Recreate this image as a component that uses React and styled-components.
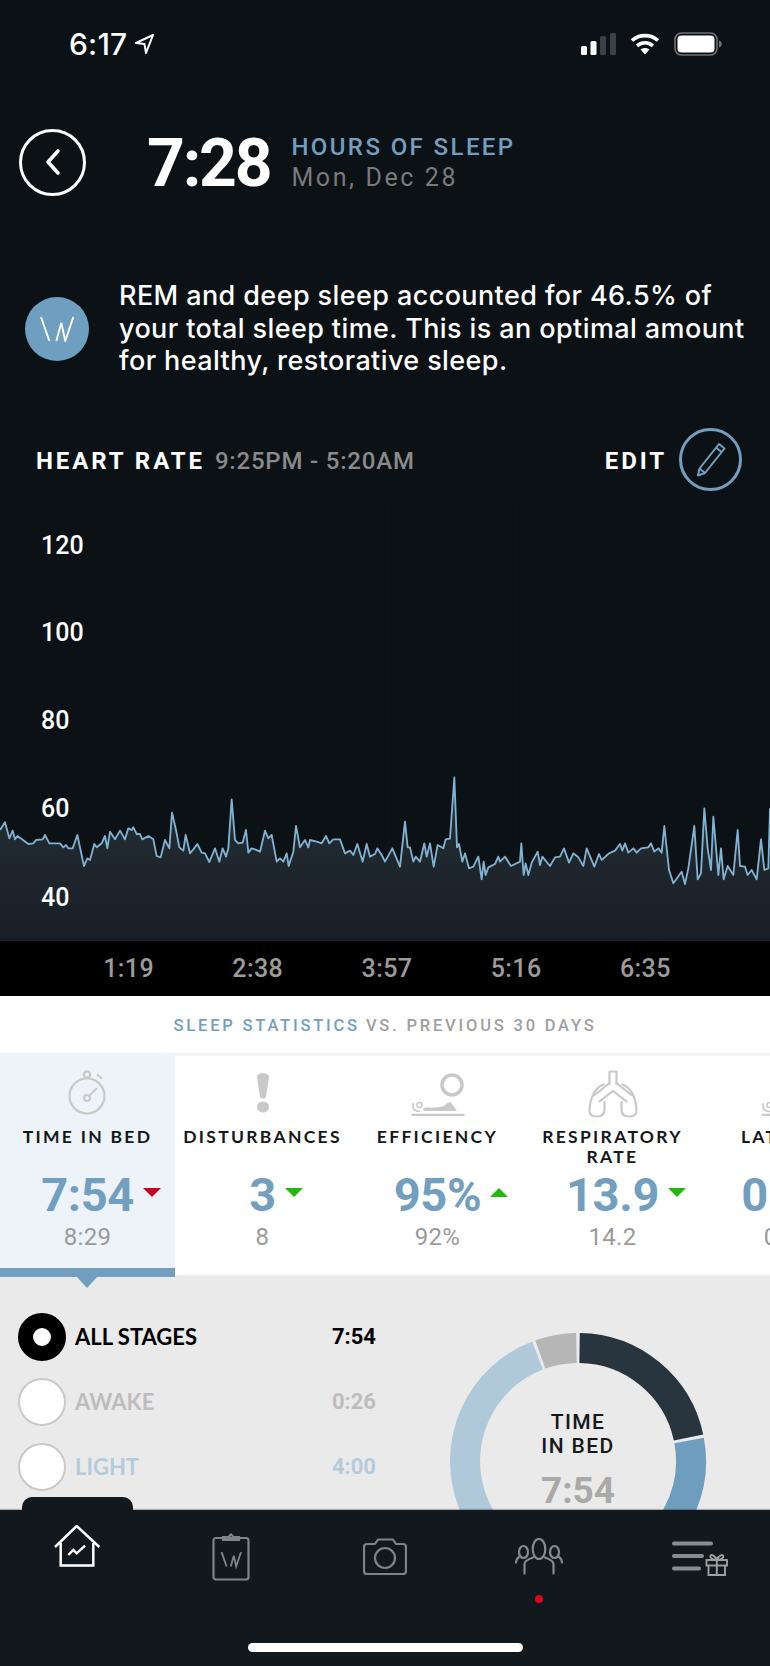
import React from 'react';
import styled, { createGlobalStyle } from 'styled-components';

const din = '"Roboto", "Liberation Sans", sans-serif';
const sans = '"Lato", "Liberation Sans", sans-serif';
const blue = '#729fbf';

const GlobalStyle = createGlobalStyle`
  html, body { margin: 0; padding: 0; background: #0c1116; }
  * { box-sizing: border-box; }
`;

const Page = styled.div`
  width: 770px;
  height: 1666px;
  display: flex;
  flex-direction: column;
  overflow: hidden;
  background: #0c1116;
  color: #fff;
  font-family: ${sans};
`;

const StatusBar = styled.div`
  height: 88px;
  display: flex;
  align-items: center;
  justify-content: space-between;
  padding: 0 48px 0 69px;
`;
const StatusTime = styled.div`
  display: flex;
  align-items: center;
  gap: 7px;
  font: 500 30px "Inter", sans-serif;
  letter-spacing: 0.2px;
`;
const StatusIcons = styled.div`
  display: flex;
  align-items: center;
  gap: 14px;
`;

const Header = styled.div`
  height: 148px;
  display: flex;
  align-items: center;
  padding-left: 19px;
`;
const BackButton = styled.div`
  width: 67px;
  height: 67px;
  border: 3.5px solid #fff;
  border-radius: 50%;
  display: flex;
  align-items: center;
  justify-content: center;
`;
const BigTime = styled.div`
  margin-left: 61px;
  padding-top: 3px;
  font: 700 66px ${din};
  line-height: 1;
  letter-spacing: -2.2px;
`;
const HeaderText = styled.div`
  margin-left: 21px;
  display: flex;
  flex-direction: column;
  gap: 3px;
`;
const HeaderTitle = styled.div`
  font: 500 24px/28px ${din};
  letter-spacing: 2.4px;
  color: ${blue};
`;
const HeaderDate = styled.div`
  font: 400 25px/28px ${din};
  letter-spacing: 2.6px;
  color: #7a7a7a;
`;

const Insight = styled.div`
  height: 186px;
  display: flex;
  align-items: center;
  gap: 30px;
  padding-left: 25px;
`;
const Avatar = styled.div`
  flex: none;
  width: 64px;
  height: 64px;
  border-radius: 50%;
  background: #6f9fc0;
  display: flex;
  align-items: center;
  justify-content: center;
`;
const InsightText = styled.p`
  margin: 0;
  font: 500 27px/32.5px "Inter", ${sans};
  letter-spacing: 0.4px;
  white-space: nowrap;
  color: #fff;
`;

const ChartHead = styled.div`
  height: 74px;
  display: flex;
  align-items: center;
  padding: 4px 28px 0 36px;
  font: 700 24px ${din};
  letter-spacing: 2.9px;
`;
const ChartRange = styled.span`
  margin-left: 10px;
  color: #8a8a8a;
  font-weight: 500;
  letter-spacing: 0.8px;
`;
const EditLabel = styled.span`
  margin-left: auto;
  margin-right: 12px;
`;
const EditCircle = styled.div`
  width: 63px;
  height: 63px;
  margin-top: -4px;
  border: 3px solid ${blue};
  border-radius: 50%;
  display: flex;
  align-items: center;
  justify-content: center;
`;

const Chart = styled.div`
  position: relative;
  height: 445px;
  background: #0c1116;
  svg { display: block; }
`;
const YAxisLabel = styled.span`
  position: absolute;
  left: 41px;
  top: ${p => p.$y - 496 - 14}px;
  font: 500 25px/30px ${din};
  color: #fff;
`;

const XAxis = styled.div`
  height: 55px;
  background: #000;
  display: grid;
  grid-template-columns: repeat(5, 129.2px);
  padding-left: 64px;
  align-items: center;
  justify-items: center;
  font: 500 25px ${din};
  letter-spacing: 0.4px;
  color: #9b9b9b;
`;

const StatsTitle = styled.div`
  height: 57px;
  background: #fff;
  display: flex;
  align-items: center;
  justify-content: center;
  gap: 6px;
  font: 500 16.5px ${din};
  letter-spacing: 2.8px;
  padding-top: 1px;
  color: #a0a0a0;
`;
const StatsAccent = styled.span`
  color: ${blue};
`;

const CardRow = styled.div`
  height: 222px;
  display: flex;
  background: #f5f5f5;
  padding-top: 3px;
  flex: none;
`;
const Card = styled.div`
  position: relative;
  flex: none;
  width: 175px;
  margin-top: ${p => (p.$active ? '-3px' : '0')};
  height: ${p => (p.$active ? '224px' : '219px')};
  padding-top: ${p => (p.$active ? '17px' : '14px')};
  background: ${p => (p.$active ? '#edf3f8' : '#fff')};
  border-bottom: ${p => (p.$active ? `9px solid ${blue}` : 'none')};
  display: flex;
  flex-direction: column;
  align-items: center;
  z-index: ${p => (p.$active ? 1 : 0)};
`;
const CardPointer = styled.div`
  position: absolute;
  left: 77px;
  bottom: -20px;
  width: 0;
  height: 0;
  border-left: 10px solid transparent;
  border-right: 10px solid transparent;
  border-top: 11px solid ${blue};
`;
const CardIcon = styled.div`
  height: 46px;
  display: flex;
  justify-content: center;
`;
const CardLabel = styled.div`
  margin-top: 11px;
  height: 40px;
  font: 700 17.5px/20px ${sans};
  letter-spacing: 2.3px;
  color: #14181b;
  text-align: center;
  white-space: pre-line;
`;
const CardValue = styled.div`
  position: relative;
  margin-top: 4px;
  font: 700 47px/48px ${din};
  letter-spacing: -0.4px;
  color: ${blue};
`;
const Trend = styled.span`
  position: absolute;
  left: calc(100% + 9px);
  top: 17px;
  width: 0;
  height: 0;
  border-left: 9px solid transparent;
  border-right: 9px solid transparent;
  border-top: ${p => (p.$up ? '0' : `9px solid ${p.$color}`)};
  border-bottom: ${p => (p.$up ? `9px solid ${p.$color}` : '0')};
`;
const CardPrev = styled.div`
  margin-top: 4px;
  font: 400 24px/28px ${din};
  letter-spacing: 0.3px;
  color: #9a9a9a;
`;

const StagePanel = styled.div`
  flex: 1;
  min-height: 0;
  overflow: hidden;
  background: #eaeaea;
  display: flex;
`;
const StageList = styled.div`
  flex: none;
  width: 358px;
  margin-left: 18px;
  padding-top: 29px;
  display: flex;
  flex-direction: column;
`;
const StageRow = styled.div`
  height: 65px;
  display: flex;
  align-items: center;
  color: ${p => p.$color};
`;
const Radio = styled.div`
  width: 48px;
  height: 48px;
  flex: none;
  border-radius: 50%;
  background: #fff;
  border: ${p => (p.$on ? '15px solid #000' : '2px solid #c9c9c9')};
`;
const StageName = styled.span`
  margin-left: 9px;
  font: 700 22px ${sans};
`;
const StageTime = styled.span`
  margin-left: auto;
  font: 700 22px ${din};
`;
const Donut = styled.div`
  position: relative;
  flex: none;
  width: 260px;
  height: 260px;
  margin: 56px 0 0 72px;
`;
const DonutCaption = styled.div`
  position: absolute;
  inset: 0;
  display: flex;
  flex-direction: column;
  align-items: center;
  padding-top: 79px;
`;
const DonutTitle = styled.div`
  font: 500 21px/24px ${din};
  letter-spacing: 1.4px;
  color: #14181b;
  text-align: center;
`;
const DonutValue = styled.div`
  margin-top: 11px;
  font: 700 37px/44px ${din};
  color: #a9a9a9;
`;

const Nav = styled.div`
  position: relative;
  flex: none;
  height: 156px;
  background: #12191e;
  box-shadow: 0 -1px 1px rgba(0, 0, 0, 0.25);
  display: flex;
  flex-direction: column;
  align-items: center;
`;
const ActiveTab = styled.div`
  position: absolute;
  left: 22px;
  top: -13px;
  width: 111px;
  height: 14px;
  background: #12191e;
  border-radius: 10px 10px 0 0;
`;
const NavIcons = styled.div`
  height: 133px;
  width: 100%;
  display: grid;
  grid-template-columns: repeat(5, 154px);
`;
const NavItem = styled.div`
  position: relative;
  display: flex;
  justify-content: center;
  align-items: flex-start;
  padding-top: ${p => p.$top}px;
  padding-left: ${p => p.$shift || 0}px;
`;
const NavDot = styled.span`
  position: absolute;
  left: 73px;
  top: 85px;
  width: 8px;
  height: 8px;
  border-radius: 50%;
  background: #e0051f;
`;
const HomeBar = styled.div`
  width: 275px;
  height: 9px;
  border-radius: 5px;
  background: #fff;
`;

// heart-rate trace, read off the reference at 3x, split in two runs at the middle of the page
const traceLeft = [[0,210],[15,187],[28,235],[38,212],[45,238],[52,228],[65,237],[85,252],[100,250],[108,240],[128,238],[135,225],[148,250],[180,250],[190,262],[198,255],[205,265],[218,265],[232,225],[252,318],[262,295],[270,300],[283,252],[290,262],[305,250],[315,228],[322,265],[330,215],[345,238],[360,212],[375,238],[385,205],[395,210],[400,202],[410,222],[420,222],[427,238],[445,228],[460,238],[470,288],[482,292],[495,240],[508,265],[516,158],[528,210],[538,262],[550,272],[557,225],[570,280],[580,268],[592,252],[605,278],[615,280],[628,306],[645,265],[658,305],[668,265],[678,290],[685,265],[695,118],[705,240],[715,250],[728,248],[738,210],[745,278],[755,265],[765,268],[780,275],[795,212],[805,235],[815,225],[830,305],[840,295],[850,305],[860,280],[866,318],[880,275],[888,198],[900,262],[915,240],[925,262],[930,240],[950,245],[965,250],[978,228],[988,250],[1000,238],[1020,238],[1035,280],[1050,272],[1060,285],[1072,252],[1088,305],[1100,252],[1110,290],[1125,282],[1132,265],[1145,285]];
const traceRight = [[0,305],[22,265],[45,320],[60,185],[68,262],[75,262],[85,305],[92,290],[105,305],[118,250],[125,290],[135,250],[146,320],[158,255],[175,265],[182,238],[195,236],[208,52],[216,262],[222,252],[232,305],[240,280],[252,325],[265,320],[280,290],[290,358],[296,305],[302,345],[310,322],[330,312],[340,290],[345,305],[360,290],[378,318],[405,305],[409,250],[416,345],[422,310],[430,345],[440,308],[458,275],[465,315],[472,290],[495,318],[510,292],[525,290],[537,265],[552,308],[565,280],[580,292],[595,318],[605,265],[628,320],[642,282],[650,300],[672,280],[690,272],[705,252],[712,272],[720,250],[730,278],[745,265],[755,278],[768,265],[790,262],[798,250],[808,275],[820,265],[830,278],[838,198],[852,330],[865,370],[890,335],[900,372],[910,325],[928,198],[938,358],[948,340],[958,145],[968,265],[978,330],[985,170],[1000,345],[1008,265],[1016,358],[1028,318],[1045,345],[1058,210],[1065,318],[1080,320],[1088,345],[1100,330],[1115,358],[1128,238],[1138,330],[1150,325],[1155,145]];

const HeartChart = () => {
  const pts = [...traceLeft, ...traceRight.map(([x, y]) => [x + 1155, y])];
  const line = pts.map(([x, y], i) => `${i ? 'L' : 'M'}${x} ${y}`).join(' ');
  const area = `${line} L2310 543 L0 543 Z`;
  return (
    <svg width="770" height="445" viewBox="0 -792 2310 1335">
      <defs>
        <linearGradient id="hrFill" x1="0" y1="100" x2="0" y2="543" gradientUnits="userSpaceOnUse">
          <stop offset="0" stopColor="#262e36" />
          <stop offset="1" stopColor="#171e25" />
        </linearGradient>
      </defs>
      {[390, 774, 1164, 1548, 1938].map(x => (
        <line key={x} x1={x} x2={x} y1={-770} y2={543} stroke="#fff" strokeOpacity="0.02" strokeWidth="3" />
      ))}
      <path d={area} fill="url(#hrFill)" />
      <path d={line} fill="none" stroke="#80b2d1" strokeWidth="5.5" strokeLinejoin="round" />
    </svg>
  );
};

const LocationArrow = () => (
  <svg width="21" height="22" viewBox="0 0 21 22" fill="none" stroke="#fff" strokeWidth="2" strokeLinejoin="round">
    <path d="M19 2 2 10l8.500 1L12 20z" />
  </svg>
);
const Signal = () => (
  <svg width="35" height="22" viewBox="0 0 35 22">
    <rect x="0" y="13" width="6" height="9" rx="1.5" fill="#fff" />
    <rect x="9.5" y="8" width="6" height="14" rx="1.5" fill="#fff" />
    <rect x="19" y="3" width="6" height="19" rx="1.5" fill="#3b4045" />
    <rect x="29" y="0" width="6" height="22" rx="1.5" fill="#3b4045" />
  </svg>
);
const Wifi = () => (
  <svg width="30" height="22" viewBox="0 0 30 22" fill="none" stroke="#fff" strokeWidth="3.6">
    <path d="M2 7.500c7.500-6.500 18.500-6.500 26 0" />
    <path d="M7 12.800c4.800-4 11.200-4 16 0" />
    <path d="M15 21.500l-4.500-5c2.700-2 6.300-2 9 0z" fill="#fff" stroke="none" />
  </svg>
);
const Battery = () => (
  <svg width="48" height="24" viewBox="0 0 48 24">
    <rect x="1" y="1" width="42" height="22" rx="6.500" fill="none" stroke="#6d7074" strokeWidth="1.6" />
    <rect x="3.500" y="3.500" width="37" height="17" rx="4" fill="#fff" />
    <path d="M45 8.500c1.800.6 2.800 1.900 2.800 3.500s-1 2.900-2.800 3.500z" fill="#6d7074" />
  </svg>
);
const Chevron = () => (
  <svg width="18" height="28" viewBox="0 0 18 28" fill="none" stroke="#fff" strokeWidth="3.6" strokeLinecap="round" strokeLinejoin="round">
    <path d="M14 3 4 14l10 11" />
  </svg>
);
const WhoopMark = ({ scale = 1, color = '#fff', weight = 1.9 }) => (
  <svg width={34 * scale} height={26 * scale} viewBox="0 0 34 26" fill="none" stroke={color} strokeWidth={weight}>
    <path d="M1 1l8.300 24" />
    <path d="M16.300 25l5-18 4 18L33.300 1" />
  </svg>
);
const Pencil = () => (
  <svg width="32" height="36" viewBox="0 0 32 36" fill="none" stroke={blue} strokeWidth="2" strokeLinejoin="round">
    <path d="M24 3l5.500 4.500L10 32 3 34.500 4.500 27.500z" />
    <path d="M21 6.500l5.500 4.500" />
    <path d="M4.500 27.500 10 32" />
  </svg>
);

const grey = '#c9c9c9';
const Stopwatch = () => (
  <svg width="50" height="46" viewBox="0 0 50 46" fill="none" stroke={grey} strokeWidth="2.2">
    <circle cx="24" cy="26" r="17.500" />
    <circle cx="24" cy="4.500" r="3.200" />
    <path d="M34 4.500l5 4" />
    <circle cx="24" cy="28" r="3" />
    <path d="M26 26l8-8" />
  </svg>
);
const Exclaim = () => (
  <svg width="20" height="46" viewBox="0 0 20 46" fill={grey}>
    <path d="M4 7c0-5 12-5 12 0l-3 20c-.4 2-5.600 2-6 0z" />
    <ellipse cx="10" cy="37" rx="6" ry="5.500" />
  </svg>
);
const SleepEfficiency = () => (
  <svg width="56" height="46" viewBox="0 0 56 46" fill="none" stroke={grey}>
    <circle cx="42" cy="15" r="10" strokeWidth="3.5" />
    <path d="M1.500 45h53" strokeWidth="2.5" />
    <circle cx="9.500" cy="35" r="2.500" strokeWidth="1.5" />
    <path d="M3 33v3c0 4 3 5.500 7 5.500" strokeWidth="1.6" />
    <path d="M14 41c-2-2 0-3.500 3-3.500h8c4 0 7-1 10-2l2-2.500c1.500-1 3.500-1 5 1l5 7z" fill={grey} stroke="none" />
  </svg>
);
const Lungs = () => (
  <svg width="50" height="48" viewBox="0 0 50 48" fill="none" stroke={grey} strokeWidth="2.2" strokeLinejoin="round" strokeLinecap="round">
    <path d="M21.500 14V1.500h7V14" />
    <path d="M21.500 13 6.600 25M28.500 13l14.900 12" />
    <path d="M25 21 11.600 31.300M25 21l13.400 10.300" />
    <path d="M15.500 14.500C8 17 2 27 1.500 40 1 45 5 46.500 9 46.500c5 0 7.500-2.500 7.500-6.500v-8" />
    <path d="M34.500 14.500C42 17 48 27 48.500 40c.5 5-3.500 6.500-7.500 6.500-5 0-7.500-2.500-7.500-6.500v-8" />
  </svg>
);

const HomeIcon = () => (
  <svg width="47" height="42" viewBox="0 0 47 42" fill="none" stroke="#fff" strokeWidth="2.5">
    <path d="M1 22 22.700 1l22.600 21" />
    <path d="M6.700 18v22.500h32.600V18" />
    <path d="M14.300 30l5-5 3.400 3.300L31 20.700" strokeWidth="2.400" />
  </svg>
);
const ClipboardIcon = () => (
  <svg width="38" height="48" viewBox="0 0 38 48" fill="none" stroke="#7f8488" strokeWidth="2.2">
    <rect x="1.500" y="5" width="35" height="41.500" rx="2.500" />
    <path d="M11 7V4h5.500l2.500-2.500L21.500 4H27v3z" />
    <g transform="translate(9 18.500) scale(.6)">
      <path d="M1 1l8.300 24" strokeWidth="3" />
      <path d="M16.300 25l5-18 4 18L33.300 1" strokeWidth="3" />
    </g>
  </svg>
);
const CameraIcon = () => (
  <svg width="44" height="37" viewBox="0 0 44 37" fill="none" stroke="#7f8488" strokeWidth="2.2" strokeLinejoin="round">
    <path d="M4 6h8l3-4.500h15L33 6h7c1.700 0 3 1.300 3 3v24c0 1.700-1.300 3-3 3H4c-1.700 0-3-1.300-3-3V9c0-1.700 1.300-3 3-3z" />
    <circle cx="22" cy="20" r="10" />
  </svg>
);
const PeopleIcon = () => (
  <svg width="48" height="37" viewBox="0 0 48 37" fill="none" stroke="#868a8d" strokeWidth="2.2" strokeLinecap="round">
    <ellipse cx="24" cy="11" rx="6.300" ry="10" />
    <ellipse cx="8.500" cy="14" rx="4.500" ry="6" />
    <ellipse cx="39.500" cy="14" rx="4.500" ry="6" />
    <path d="M9.500 35.500V26c0-2.500 4-5 8.500-6.500M38.500 35.500V26c0-2.500-4-5-8.500-6.500" />
    <path d="M1 24.500c0-3 1.500-4.500 3-5.500M47 24.500c0-3-1.500-4.500-3-5.500" />
  </svg>
);
const MenuGiftIcon = () => (
  <svg width="56" height="35" viewBox="0 0 56 35">
    <g fill="none" stroke="#868d93" strokeWidth="4" strokeLinecap="round">
      <path d="M2 2.500h37M2 15h28M2 27.500h25" />
    </g>
    <g fill="none" stroke="#a0a0a0" strokeWidth="1.9">
      <rect x="34.500" y="19" width="20.500" height="5.500" />
      <path d="M36.500 24.500V34h16.500v-9.500M44.800 16v18M44.800 19c-2-5-6-6-6.500-4s3 4 6.500 4c3.500 0 7-2 6.500-4s-4.500-1-6.500 4z" />
    </g>
  </svg>
);

const stats = [
  { label: 'TIME IN BED', value: '7:54', prev: '8:29', icon: <Stopwatch />, color: '#c8001e', active: true },
  { label: 'DISTURBANCES', value: '3', prev: '8', icon: <Exclaim />, color: '#22b80e' },
  { label: 'EFFICIENCY', value: '95%', prev: '92%', icon: <SleepEfficiency />, color: '#22b80e', up: true },
  { label: 'RESPIRATORY\nRATE', value: '13.9', prev: '14.2', icon: <Lungs />, color: '#22b80e' },
  { label: 'LATENCY', value: '0:12', prev: '0:15', icon: <SleepEfficiency /> },
];

const stages = [
  { name: 'ALL STAGES', time: '7:54', color: '#000', on: true },
  { name: 'AWAKE', time: '0:26', color: '#bdbdbd' },
  { name: 'LIGHT', time: '4:00', color: '#b5cbdc' },
];

const polar = (r, deg) => {
  const a = ((deg - 90) * Math.PI) / 180;
  return [130 + r * Math.cos(a), 130 + r * Math.sin(a)];
};
const arc = (from, to, r = 113) => {
  const [x1, y1] = polar(r, from);
  const [x2, y2] = polar(r, to);
  return `M${x1} ${y1} A${r} ${r} 0 ${to - from > 180 ? 1 : 0} 1 ${x2} ${y2}`;
};
const segments = [
  { from: 0.8, to: 78, color: '#28343e' },
  { from: 79.5, to: 158, color: '#6f9dbd' },
  { from: 159, to: 339, color: '#afc8da' },
  { from: 340.5, to: 359.2, color: '#b6b6b6' },
];

export default function App() {
  return (
    <Page>
      <GlobalStyle />
      <StatusBar>
        <StatusTime>6:17 <LocationArrow /></StatusTime>
        <StatusIcons>
          <Signal />
          <Wifi />
          <Battery />
        </StatusIcons>
      </StatusBar>

      <Header>
        <BackButton><Chevron /></BackButton>
        <BigTime>7:28</BigTime>
        <HeaderText>
          <HeaderTitle>HOURS OF SLEEP</HeaderTitle>
          <HeaderDate>Mon, Dec 28</HeaderDate>
        </HeaderText>
      </Header>

      <Insight>
        <Avatar><WhoopMark /></Avatar>
        <InsightText>
          REM and deep sleep accounted for 46.5% of<br />
          your total sleep time. This is an optimal amount<br />
          for healthy, restorative sleep.
        </InsightText>
      </Insight>

      <ChartHead>
        HEART RATE
        <ChartRange>9:25PM - 5:20AM</ChartRange>
        <EditLabel>EDIT</EditLabel>
        <EditCircle><Pencil /></EditCircle>
      </ChartHead>

      <Chart>
        <HeartChart />
        {[[120, 545], [100, 632], [80, 720], [60, 808], [40, 897]].map(([v, y]) => (
          <YAxisLabel key={v} $y={y}>{v}</YAxisLabel>
        ))}
      </Chart>

      <XAxis>
        {['1:19', '2:38', '3:57', '5:16', '6:35'].map(t => <span key={t}>{t}</span>)}
      </XAxis>

      <StatsTitle>
        <StatsAccent>SLEEP STATISTICS</StatsAccent> VS. PREVIOUS 30 DAYS
      </StatsTitle>

      <CardRow>
        {stats.map(s => (
          <Card key={s.label} $active={s.active}>
            <CardIcon>{s.icon}</CardIcon>
            <CardLabel>{s.label}</CardLabel>
            <CardValue>
              {s.value}
              {s.color && <Trend $color={s.color} $up={s.up} />}
            </CardValue>
            <CardPrev>{s.prev}</CardPrev>
            {s.active && <CardPointer />}
          </Card>
        ))}
      </CardRow>

      <StagePanel>
        <StageList>
          {stages.map(s => (
            <StageRow key={s.name} $color={s.color}>
              <Radio $on={s.on} />
              <StageName>{s.name}</StageName>
              <StageTime>{s.time}</StageTime>
            </StageRow>
          ))}
        </StageList>
        <Donut>
          <svg width="260" height="260" viewBox="0 0 260 260" fill="none">
            {segments.map(s => (
              <path key={s.color} d={arc(s.from, s.to)} stroke={s.color} strokeWidth="30" />
            ))}
          </svg>
          <DonutCaption>
            <DonutTitle>TIME<br />IN BED</DonutTitle>
            <DonutValue>7:54</DonutValue>
          </DonutCaption>
        </Donut>
      </StagePanel>

      <Nav>
        <ActiveTab />
        <NavIcons>
          <NavItem $top={15}><HomeIcon /></NavItem>
          <NavItem $top={23}><ClipboardIcon /></NavItem>
          <NavItem $top={28}><CameraIcon /></NavItem>
          <NavItem $top={28}><PeopleIcon /><NavDot /></NavItem>
          <NavItem $top={31} $shift={14}><MenuGiftIcon /></NavItem>
        </NavIcons>
        <HomeBar />
      </Nav>
    </Page>
  );
}
